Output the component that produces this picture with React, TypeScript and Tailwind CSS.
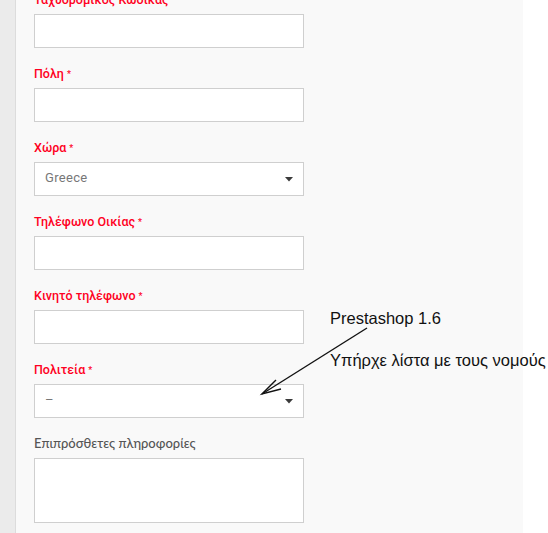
import React from "react";

type Field = {
  label: string;
  required?: boolean;
  kind: "input" | "select" | "textarea";
  value?: string;
};

const fields: Field[] = [
  { label: "Ταχυδρομικός Κωδικάς", required: false, kind: "input" },
  { label: "Πόλη", required: true, kind: "input" },
  { label: "Χώρα", required: true, kind: "select", value: "Greece" },
  { label: "Τηλέφωνο Οικίας", required: true, kind: "input" },
  { label: "Κινητό τηλέφωνο", required: true, kind: "input" },
  { label: "Πολιτεία", required: true, kind: "select", value: "–" },
  { label: "Επιπρόσθετες πληροφορίες", kind: "textarea" },
];

function Caret() {
  return (
    <svg width="8" height="5" viewBox="0 0 8 5" className="shrink-0">
      <path d="M0 0 H8 L4 4.5 Z" fill="#3a3a3a" />
    </svg>
  );
}

function FormField({ field }: { field: Field }) {
  const isOptional = field.kind === "textarea";
  return (
    <div className="flex flex-col">
      <label
        className={
          isOptional
            ? "h-5 leading-[17px] mb-[3px] text-[13px] text-[#555555] font-['Lato',sans-serif] font-medium"
            : "h-5 leading-[17px] mb-[3px] text-[12.5px] text-[#ff0022] font-['Roboto',sans-serif] font-medium"
        }
      >
        {field.label}
        {field.required && (
          <sup className="ml-[3px] text-[9px] text-[#ff0022] relative top-[-1px]">*</sup>
        )}
      </label>
      {field.kind === "input" && (
        <div className="h-[34px] w-[270px] bg-white border border-[#cfcfcf]" />
      )}
      {field.kind === "select" && (
        <div className="h-[34px] w-[270px] bg-white border border-[#cfcfcf] flex items-center justify-between pl-[10px] pr-[10px]">
          <span className="text-[13px] leading-4 pb-[2px] text-[#777777] font-['Roboto',sans-serif] tracking-[0.3px]">
            {field.value}
          </span>
          <Caret />
        </div>
      )}
      {field.kind === "textarea" && (
        <div className="h-[65px] w-[270px] bg-white border border-[#cfcfcf]" />
      )}
    </div>
  );
}

export default function App() {
  return (
    <div className="relative w-[548px] h-[533px] overflow-hidden bg-white flex">
      <div className="w-[16px] bg-[#ebebeb] border-r border-[#dcdcdc] shrink-0" />
      <div className="w-[507px] bg-[#f9f9f9] shrink-0 pl-[18px]">
        <div className="mt-[-9px] flex flex-col gap-[17px]">
          {fields.map((f) => (
            <FormField key={f.label} field={f} />
          ))}
        </div>
      </div>

      {/* annotation overlay */}
      <div className="absolute left-[330px] top-[308px] text-[16.5px] leading-[20px] text-[#111] font-['Liberation_Sans',Arial,sans-serif] whitespace-nowrap">
        Prestashop 1.6
      </div>
      <div className="absolute left-[330px] top-[350px] text-[16.5px] leading-[20px] text-[#111] font-['Liberation_Sans',Arial,sans-serif] whitespace-nowrap">
        Υπήρχε λίστα με τους νομούς
      </div>
      <svg
        className="absolute left-0 top-0 pointer-events-none"
        width="548"
        height="533"
        viewBox="0 0 548 533"
      >
        <line x1="367" y1="328" x2="262" y2="394" stroke="#111" strokeWidth="1.4" />
        <polyline
          points="276,380 262,394 281,389"
          fill="none"
          stroke="#111"
          strokeWidth="1.4"
        />
      </svg>
    </div>
  );
}
